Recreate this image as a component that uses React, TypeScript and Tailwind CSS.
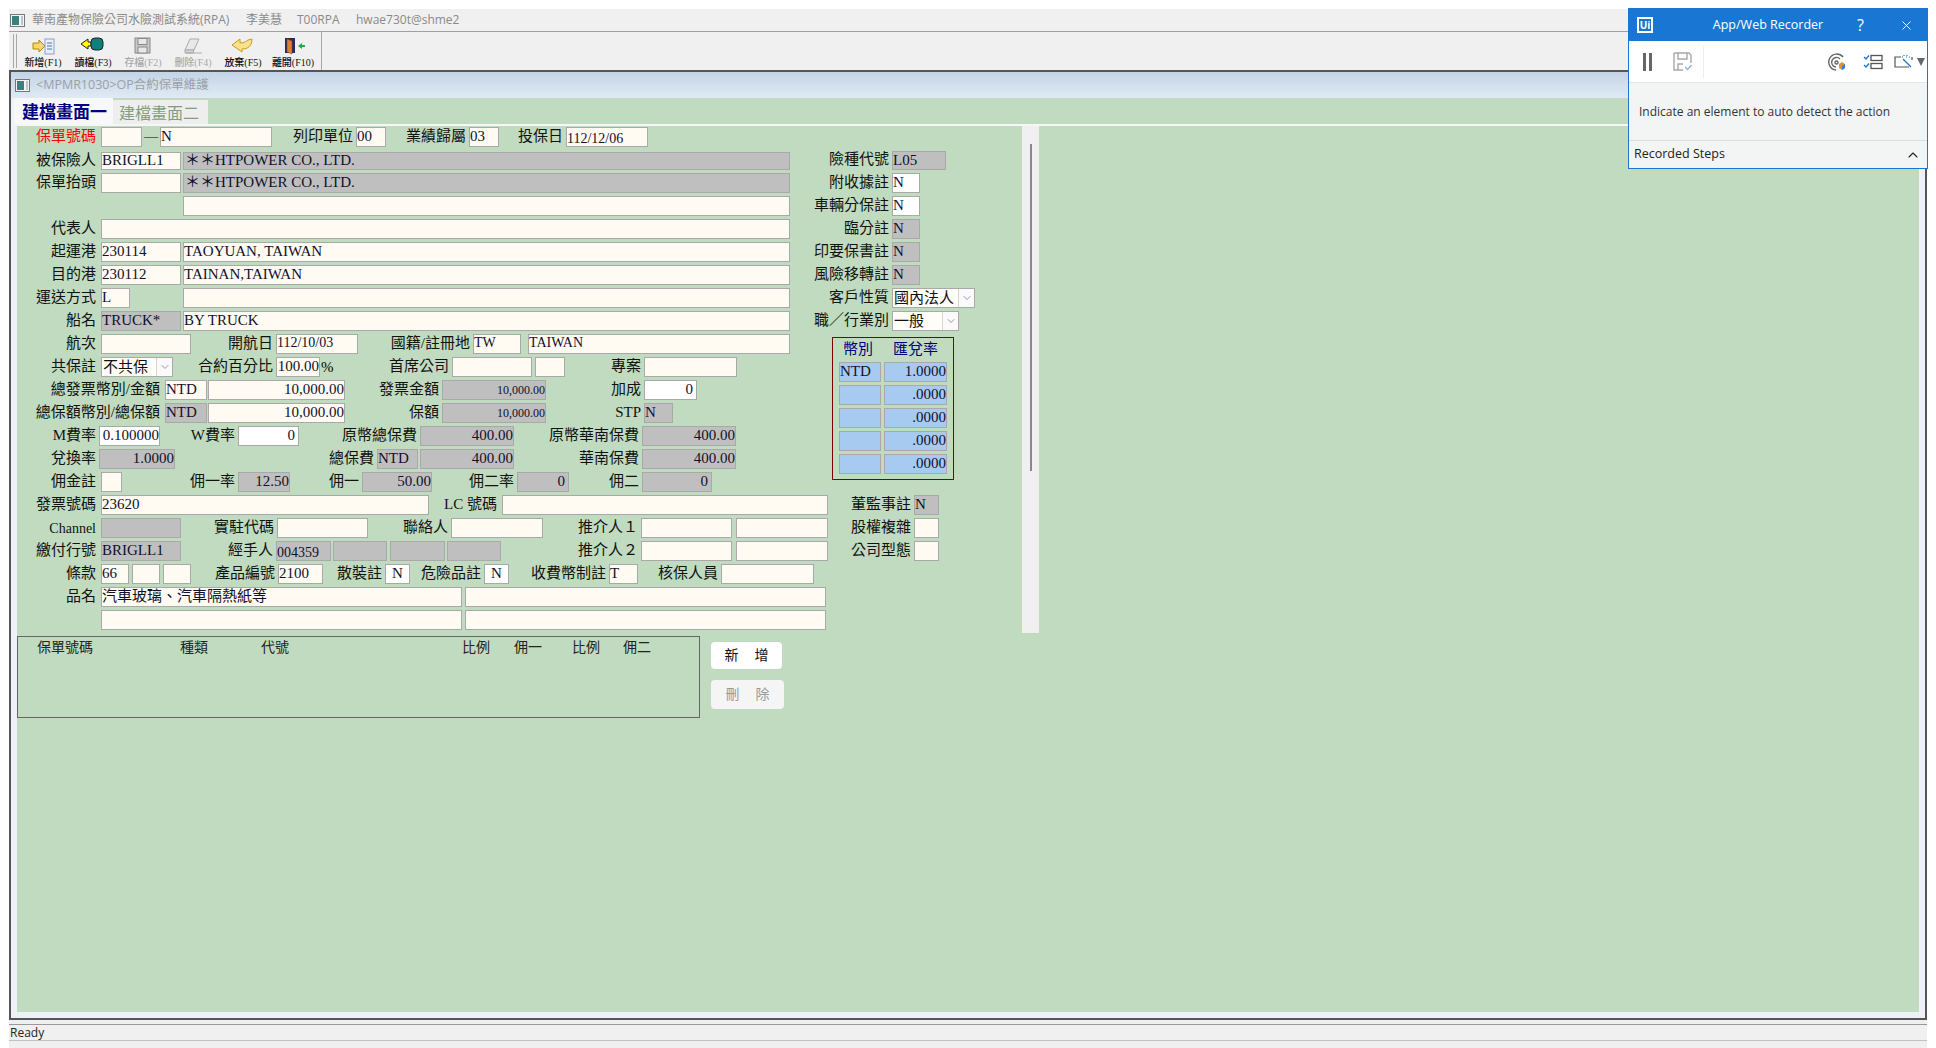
import type { ReactNode } from "react";
import { twMerge } from "tailwind-merge";
import { ChevronDown, ChevronUp, X } from "lucide-react";

interface BoxProps {
  className?: string;
  children?: ReactNode;
}

// 右對齊標籤，寬度從前一欄結束算到下一欄開始
const L = ({ className, children }: BoxProps) => (
  <div
    className={twMerge(
      "shrink-0 h-[20px] pr-[3px] text-right whitespace-nowrap text-[15px] leading-[18px] text-[#111]",
      className
    )}
  >
    {children}
  </div>
);

const F = ({ className, children }: BoxProps) => (
  <div
    className={twMerge(
      "shrink-0 h-[20px] overflow-hidden whitespace-nowrap border border-[#a9a9a9] bg-[#fffbf3] text-[15px] leading-[17px] text-[#10102a]",
      className
    )}
  >
    {children}
  </div>
);

const G = ({ className, children }: BoxProps) => (
  <F className={twMerge("bg-[#bfbfbf]", className)}>{children}</F>
);

const W = ({ className, children }: BoxProps) => (
  <F className={twMerge("bg-white", className)}>{children}</F>
);

const Row = ({ className, children }: BoxProps) => (
  <div className={twMerge("flex items-start h-[23px]", className)}>{children}</div>
);

const Select = ({ className, text }: { className?: string; text: string }) => (
  <div
    className={twMerge(
      "shrink-0 h-[20px] flex items-center justify-between border border-[#a9a9a9] bg-[#fffdf8] text-[15px] leading-[18px] text-[#111] overflow-hidden whitespace-nowrap",
      className
    )}
  >
    <span className="pl-[1px]">{text}</span>
    <span className="shrink-0 w-[16px] h-[18px] flex items-center justify-center bg-[#fafafa] border-l border-[#d4d4d4]">
      <ChevronDown size={12} strokeWidth={1.5} className="text-[#777]" />
    </span>
  </div>
);

const ToolBtn = ({
  label,
  off,
  children,
}: {
  label: string;
  off?: boolean;
  children: ReactNode;
}) => (
  <div className="w-[50px] flex flex-col items-center pt-[5px]">
    <svg width="26" height="18" viewBox="0 0 26 18">
      {children}
    </svg>
    <div
      className={twMerge(
        "mt-px text-[10px] leading-[13px] whitespace-nowrap font-medium",
        off ? "text-[#a8a8a8]" : "text-[#111]"
      )}
    >
      {label}
    </div>
  </div>
);

const Recorder = () => (
  <div className="absolute left-[1628px] top-[8px] w-[300px] h-[161px] flex flex-col border border-[#1976d2] bg-[#f3f5f5] font-['Open_Sans','Noto_Sans_CJK_TC',sans-serif]">
    <div className="h-[32px] flex items-center bg-[#1976d2] text-white">
      <div className="ml-[8px] w-[16px] h-[16px] border-2 border-white flex items-center justify-center text-[10px] leading-none font-bold">
        Ui
      </div>
      <div className="ml-[59px] w-[112px] text-center text-[12.5px] whitespace-nowrap">
        App/Web Recorder
      </div>
      <div className="ml-[33px] text-[16px] leading-none">?</div>
      <X size={15} strokeWidth={1.5} className="ml-[35px]" />
    </div>
    <div className="h-[42px] flex items-center bg-white border-b border-[#e6e6e6]">
      <div className="ml-[14px] flex gap-[3px]">
        <div className="w-[3px] h-[18px] bg-[#666]" />
        <div className="w-[3px] h-[18px] bg-[#666]" />
      </div>
      <svg className="ml-[21px]" width="20" height="20" viewBox="0 0 20 20" fill="none" stroke="#a8a8a8" strokeWidth="1.4">
        <path d="M1 1h15l2 2v8M1 1v17h9" />
        <path d="M5 1v6h9V1M5 18v-6h5" />
        <path d="M12 15l2.5 2.5L18.5 13" stroke="#8ab4e8" />
      </svg>
      <div className="ml-[10px] w-px h-[32px] bg-[#eeeeee]" />
      <svg className="ml-[123px]" width="20" height="20" viewBox="0 0 20 20" fill="none" stroke="#666" strokeWidth="1.4">
        <path d="M16 5A8 8 0 1 0 9 18" />
        <path d="M13 7a4.800 4.800 0 1 0-4 8" />
        <circle cx="9.500" cy="10.500" r="1.500" />
        <path d="M12 12l3-2 3 2v4l-3 2-3-2z" fill="#f28c28" stroke="none" />
        <path d="M15 14l3-2v4l-3 2z" fill="#2f80d8" stroke="none" />
      </svg>
      <svg className="ml-[16px]" width="20" height="16" viewBox="0 0 20 16" fill="none" stroke="#555" strokeWidth="1.3">
        <rect x="8" y="1.500" width="11" height="5" />
        <rect x="8" y="9.500" width="11" height="5" />
        <path d="M1 3l2 2 3-3.500M1 11l2 2 3-3.500" stroke="#1976d2" />
      </svg>
      <svg className="ml-[11px]" width="20" height="16" viewBox="0 0 20 16" fill="none" stroke="#555" strokeWidth="1.2">
        <path d="M7 3H1v10h14M18 3v3" />
        <path d="M9 5l8 8" stroke="#1976d2" />
        <path d="M10 1v1M13 1v1M8 3h1M12 3h1M15 3h1" stroke="#1976d2" strokeDasharray="1 1" />
      </svg>
      <div className="ml-[3px] w-0 h-0 border-x-[4px] border-x-transparent border-t-[8px] border-t-[#666]" />
    </div>
    <div className="flex-1 flex items-center pl-[10px] text-[12px] text-[#333] whitespace-nowrap">
      Indicate an element to auto detect the action
    </div>
    <div className="h-[28px] flex items-center justify-between pl-[5px] pr-[6px] border-t border-[#dddddd] text-[12.5px] text-[#222]">
      Recorded Steps
      <ChevronUp size={16} strokeWidth={1.6} />
    </div>
  </div>
);

const LeftFields = () => (
  <div className="w-[783px] shrink-0">
    <Row>
      <L className="w-[84px] pr-[5px] text-[#ff0000]">保單號碼</L>
      <F className="w-[41px]" />
      <div className="w-[18px] text-center text-[14px] leading-[20px]">—</div>
      <F className="w-[112px]">N</F>
      <L className="w-[84px]">列印單位</L>
      <F className="w-[30px]">00</F>
      <L className="w-[83px]">業績歸屬</L>
      <F className="w-[30px]">03</F>
      <L className="w-[67px]">投保日</L>
      <F className="w-[82px] text-[14px]">112/12/06</F>
    </Row>
    <Row>
      <L className="w-[84px] pr-[5px] pt-px">被保險人</L>
      <F className="w-[80px] h-[18px] mt-[2px] leading-[15px]">BRIGLL1</F>
      <G className="w-[607px] ml-[2px] h-[18px] mt-[2px] leading-[15px] pl-[1px]">＊＊HTPOWER CO., LTD.</G>
    </Row>
    <Row>
      <L className="w-[84px] pr-[5px]">保單抬頭</L>
      <F className="w-[80px]" />
      <G className="w-[607px] ml-[2px] pl-[1px]">＊＊HTPOWER CO., LTD.</G>
    </Row>
    <Row>
      <F className="w-[607px] ml-[166px]" />
    </Row>
    <Row>
      <L className="w-[84px] pr-[5px]">代表人</L>
      <F className="w-[689px]" />
    </Row>
    <Row>
      <L className="w-[84px] pr-[5px]">起運港</L>
      <F className="w-[80px]">230114</F>
      <F className="w-[607px] ml-[2px]">TAOYUAN, TAIWAN</F>
    </Row>
    <Row>
      <L className="w-[84px] pr-[5px]">目的港</L>
      <F className="w-[80px]">230112</F>
      <F className="w-[607px] ml-[2px]">TAINAN,TAIWAN</F>
    </Row>
    <Row>
      <L className="w-[84px] pr-[5px]">運送方式</L>
      <F className="w-[29px]">L</F>
      <F className="w-[607px] ml-[53px]" />
    </Row>
    <Row>
      <L className="w-[84px] pr-[5px]">船名</L>
      <G className="w-[80px]">TRUCK*</G>
      <F className="w-[607px] ml-[2px]">BY TRUCK</F>
    </Row>
    <Row>
      <L className="w-[84px] pr-[5px]">航次</L>
      <F className="w-[90px]" />
      <L className="w-[85px]">開航日</L>
      <F className="w-[82px] text-[14px] leading-[16px]">112/10/03</F>
      <L className="w-[115px]">國籍/註冊地</L>
      <F className="w-[48px] text-[14px] leading-[15px]">TW</F>
      <F className="w-[262px] ml-[7px] text-[14px] leading-[15px]">TAIWAN</F>
    </Row>
    <Row>
      <L className="w-[84px] pr-[5px]">共保註</L>
      <Select className="w-[72px]" text="不共保" />
      <L className="w-[103px]">合約百分比</L>
      <F className="w-[44px] text-right">100.00</F>
      <div className="w-[15px] pl-px text-[15px] leading-[20px]">%</div>
      <L className="w-[117px]">首席公司</L>
      <F className="w-[80px]" />
      <F className="w-[30px] ml-[3px]" />
      <L className="w-[79px]">專案</L>
      <F className="w-[93px]" />
    </Row>
    <Row>
      <L className="w-[148px] pr-[5px]">總發票幣別/金額</L>
      <F className="w-[42px]">NTD</F>
      <F className="w-[137px] ml-px text-right">10,000.00</F>
      <L className="w-[97px]">發票金額</L>
      <G className="w-[104px] text-right text-[12px]">10,000.00</G>
      <L className="w-[98px]">加成</L>
      <W className="w-[53px] text-right pr-[3px]">0</W>
    </Row>
    <Row>
      <L className="w-[148px] pr-[5px]">總保額幣別/總保額</L>
      <G className="w-[42px]">NTD</G>
      <F className="w-[137px] ml-px text-right">10,000.00</F>
      <L className="w-[97px]">保額</L>
      <G className="w-[104px] text-right text-[12px]">10,000.00</G>
      <L className="w-[98px]">STP</L>
      <G className="w-[29px]">N</G>
    </Row>
    <Row>
      <L className="w-[82px]">M費率</L>
      <W className="w-[61px] text-right">0.100000</W>
      <L className="w-[78px]">W費率</L>
      <W className="w-[61px] text-right pr-[3px]">0</W>
      <L className="w-[121px]">原幣總保費</L>
      <G className="w-[94px] text-right">400.00</G>
      <L className="w-[128px]">原幣華南保費</L>
      <G className="w-[94px] text-right">400.00</G>
    </Row>
    <Row>
      <L className="w-[82px]">兌換率</L>
      <G className="w-[76px] text-right">1.0000</G>
      <L className="w-[202px]">總保費</L>
      <G className="w-[41px]">NTD</G>
      <G className="w-[94px] ml-[2px] text-right">400.00</G>
      <L className="w-[128px]">華南保費</L>
      <G className="w-[94px] text-right">400.00</G>
    </Row>
    <Row>
      <L className="w-[84px] pr-[5px]">佣金註</L>
      <F className="w-[21px]" />
      <L className="w-[116px]">佣一率</L>
      <G className="w-[52px] text-right">12.50</G>
      <L className="w-[72px]">佣一</L>
      <G className="w-[70px] text-right">50.00</G>
      <L className="w-[85px]">佣二率</L>
      <G className="w-[52px] text-right pr-[3px]">0</G>
      <L className="w-[73px]">佣二</L>
      <G className="w-[70px] text-right pr-[3px]">0</G>
    </Row>
  </div>
);

const RightFields = () => (
  <div className="w-[222px] shrink-0 pt-[23px]">
    <Row>
      <L className="w-[92px]">險種代號</L>
      <G className="w-[54px] h-[19px] mt-px leading-[16px]">L05</G>
    </Row>
    <Row>
      <L className="w-[92px]">附收據註</L>
      <F className="w-[28px] bg-white">N</F>
    </Row>
    <Row>
      <L className="w-[92px]">車輛分保註</L>
      <F className="w-[28px] bg-white">N</F>
    </Row>
    <Row>
      <L className="w-[92px]">臨分註</L>
      <G className="w-[28px]">N</G>
    </Row>
    <Row>
      <L className="w-[92px]">印要保書註</L>
      <G className="w-[28px]">N</G>
    </Row>
    <Row>
      <L className="w-[92px]">風險移轉註</L>
      <G className="w-[28px]">N</G>
    </Row>
    <Row>
      <L className="w-[92px]">客戶性質</L>
      <Select className="w-[83px]" text="國內法人" />
    </Row>
    <Row>
      <L className="w-[92px]">職／行業別</L>
      <Select className="w-[67px]" text="一般" />
    </Row>
    <div className="ml-[32px] mt-[3px] w-[122px] h-[143px] border border-[#800000]">
      <div className="flex h-[24px] pl-[10px] text-[15px] leading-[22px] text-[#000080]">
        <div className="w-[50px]">幣別</div>
        <div>匯兌率</div>
      </div>
      {["1.0000", ".0000", ".0000", ".0000", ".0000"].map((rate, i) => (
        <div key={i} className="flex h-[23px] pl-[6px] gap-[3px]">
          <F className="w-[42px] bg-[#a6caf0]">{i === 0 ? "NTD" : ""}</F>
          <F className="w-[63px] bg-[#a6caf0] text-right">{rate}</F>
        </div>
      ))}
    </div>
  </div>
);

const BottomFields = () => (
  <div>
    <Row>
      <L className="w-[84px] pr-[5px]">發票號碼</L>
      <F className="w-[328px]">23620</F>
      <L className="w-[73px] pr-[5px]">LC 號碼</L>
      <F className="w-[326px]" />
      <L className="w-[86px]">董監事註</L>
      <G className="w-[25px]">N</G>
    </Row>
    <Row>
      <L className="w-[84px] pr-[5px] text-[14px]">Channel</L>
      <G className="w-[80px]" />
      <L className="w-[96px]">實駐代碼</L>
      <F className="w-[91px]" />
      <L className="w-[83px]">聯絡人</L>
      <F className="w-[92px]" />
      <L className="w-[98px]">推介人１</L>
      <F className="w-[91px]" />
      <F className="w-[92px] ml-[4px]" />
      <L className="w-[86px]">股權複雜</L>
      <F className="w-[25px]" />
    </Row>
    <Row>
      <L className="w-[84px] pr-[5px]">繳付行號</L>
      <G className="w-[80px]">BRIGLL1</G>
      <L className="w-[95px]">經手人</L>
      <G className="w-[55px] text-[14px]">004359</G>
      <G className="w-[54px] ml-[2px]" />
      <G className="w-[55px] ml-[3px]" />
      <G className="w-[54px] ml-[2px]" />
      <L className="w-[140px]">推介人２</L>
      <F className="w-[91px]" />
      <F className="w-[92px] ml-[4px]" />
      <L className="w-[86px]">公司型態</L>
      <F className="w-[25px]" />
    </Row>
    <Row>
      <L className="w-[84px] pr-[5px]">條款</L>
      <F className="w-[28px]">66</F>
      <F className="w-[28px] ml-[3px]" />
      <F className="w-[28px] ml-[3px]" />
      <L className="w-[87px]">產品編號</L>
      <F className="w-[45px]">2100</F>
      <L className="w-[62px]">散裝註</L>
      <W className="w-[25px] text-center">N</W>
      <L className="w-[74px]">危險品註</L>
      <W className="w-[25px] text-center">N</W>
      <L className="w-[100px]">收費幣制註</L>
      <F className="w-[29px]">T</F>
      <L className="w-[83px]">核保人員</L>
      <F className="w-[93px]" />
    </Row>
    <Row>
      <L className="w-[84px] pr-[5px]">品名</L>
      <F className="w-[361px]">汽車玻璃、汽車隔熱紙等</F>
      <F className="w-[361px] ml-[3px]" />
    </Row>
    <Row>
      <F className="w-[361px] ml-[84px]" />
      <F className="w-[361px] ml-[3px]" />
    </Row>
  </div>
);

export default function App() {
  return (
    <div className="relative w-[1936px] h-[1048px] overflow-hidden bg-white pt-[9px] pl-[9px] pr-[9px] flex flex-col font-['Liberation_Serif','Noto_Sans_CJK_TC',serif]">
      {/* 主視窗標題 */}
      <div className="h-[23px] flex items-center bg-[#f0f0f0] border-b border-[#a0a0a0] text-[12px] text-[#8a8a8a] font-['Open_Sans','Noto_Sans_CJK_TC',sans-serif] whitespace-nowrap">
        <svg className="ml-[1px]" width="15" height="13" viewBox="0 0 15 13">
          <rect x="0.500" y="0.500" width="14" height="12" fill="#f4f4f4" stroke="#777" />
          <rect x="2" y="2" width="7" height="9" fill="#3b7f7f" />
          <rect x="11" y="2" width="2" height="9" fill="#b8c4d0" />
        </svg>
        <span className="ml-[7px] w-[214px]">華南產物保險公司水險測試系統(RPA)</span>
        <span className="w-[51px]">李美慧</span>
        <span className="w-[59px]">T00RPA</span>
        <span>hwae730t@shme2</span>
      </div>

      {/* 工具列 */}
      <div className="h-[38px] flex bg-[#f0f0f0]">
        <div className="ml-[4px] mr-[1px] mt-[2px] w-[4px] h-[34px] border-x border-[#a8a8a8]" />
        <ToolBtn label="新增(F1)">
          <path d="M3 6h6V3l6 6-6 6v-3H3z" fill="#f5d76e" stroke="#b8860b" />
          <rect x="15" y="2" width="9" height="15" fill="#e8eefa" stroke="#8aa0c8" />
          <path d="M17 6h5M17 9h5M17 12h5" stroke="#5577aa" />
        </ToolBtn>
        <ToolBtn label="讀檔(F3)">
          <path d="M11 9H8v3L1 7l7-5v3h3z" fill="#ffff00" stroke="#222" />
          <rect x="11" y="1" width="12" height="12" rx="4" fill="#0f7f7f" stroke="#222" />
        </ToolBtn>
        <ToolBtn label="存檔(F2)" off>
          <rect x="5" y="1" width="15" height="15" fill="#c8c8c8" stroke="#888" />
          <rect x="8" y="1.500" width="9" height="6" fill="#e8e8e8" stroke="#888" />
          <rect x="8" y="10" width="9" height="6" fill="#e8e8e8" stroke="#888" />
        </ToolBtn>
        <ToolBtn label="刪除(F4)" off>
          <path d="M10 2h9l-5 11H5z" fill="#e8e8e8" stroke="#aaa" />
          <path d="M5 13h9l-1 3H5zM6 16h16" fill="#d4d4d4" stroke="#aaa" />
        </ToolBtn>
        <ToolBtn label="放棄(F5)">
          <path d="M2 8l8-6v4c3 0 6-1 8-3l4-1c0 7-4 10-10 10v3z" fill="#fbe28a" stroke="#c89a20" />
        </ToolBtn>
        <ToolBtn label="離開(F10)">
          <rect x="5" y="1" width="10" height="15" fill="#2a2a60" />
          <path d="M7 2l5 2v13l-5-2z" fill="#d9822b" stroke="#7a4410" strokeWidth="0.500" />
          <path d="M22 6v2h3v2h-3v2l-4-3z" fill="#22aa44" />
        </ToolBtn>
        <div className="ml-[3px] w-px bg-[#a8a8a8]" />
      </div>

      {/* 子視窗 */}
      <div className="h-[950px] border-2 border-[#555] flex flex-col bg-[#eef1f7]">
        <div className="h-[26px] flex items-center bg-gradient-to-b from-[#c4d4e6] to-[#e0eaf4] text-[12.5px] text-[#9aa0a6] font-['Open_Sans','Noto_Sans_CJK_TC',sans-serif] whitespace-nowrap">
          <svg className="ml-[4px]" width="15" height="13" viewBox="0 0 15 13">
            <rect x="0.500" y="0.500" width="14" height="12" fill="#f4f4f4" stroke="#777" />
            <rect x="2" y="2" width="7" height="9" fill="#3b7f7f" />
            <rect x="11" y="2" width="2" height="9" fill="#b8c4d0" />
          </svg>
          <span className="ml-[6px]">&lt;MPMR1030&gt;OP合約保單維護</span>
        </div>
        <div className="flex-1 mx-[6px] mb-[6px] flex flex-col bg-[#c0dbbf]">
          {/* 頁籤 */}
          <div className="h-[28px] flex items-end border-b-2 border-[#f4f7f4] pb-0">
            <div className="-ml-[3px] w-[99px] h-[26px] bg-[#f8f8f8] pl-[8px] text-[17px] leading-[25px] font-bold text-[#000080] font-['Noto_Sans_CJK_TC',sans-serif] whitespace-nowrap">
              建檔畫面一
            </div>
            <div className="w-[95px] h-[24px] bg-[#eeeeee] pl-[6px] text-[16px] leading-[24px] text-[#7f9f7f] font-['Noto_Sans_CJK_TC',sans-serif] whitespace-nowrap">
              建檔畫面二
            </div>
          </div>

          <div className="flex h-[507px]">
            <div className="w-[1005px] shrink-0 pt-px">
              <div className="flex">
                <LeftFields />
                <RightFields />
              </div>
              <BottomFields />
            </div>
            <div className="w-[17px] shrink-0 bg-[#f0f0f0] pt-[18px] pl-[8px]">
              <div className="w-[2px] h-[327px] bg-[#888]" />
            </div>
          </div>

          {/* 明細 */}
          <div className="flex items-start mt-[3px]">
            <div className="w-[683px] h-[82px] border border-[#666] flex pl-[19px] text-[14px] leading-[18px] text-[#222] font-['Noto_Sans_CJK_TC',sans-serif] whitespace-nowrap">
              <div className="w-[143px]">保單號碼</div>
              <div className="w-[81px]">種類</div>
              <div className="w-[201px]">代號</div>
              <div className="w-[52px]">比例</div>
              <div className="w-[58px]">佣一</div>
              <div className="w-[51px]">比例</div>
              <div>佣二</div>
            </div>
            <div className="ml-[11px] mt-[6px]">
              <div className="w-[71px] h-[27px] flex items-center justify-center gap-[16px] rounded-sm bg-white text-[14px] text-[#111]">
                <span>新</span>
                <span>增</span>
              </div>
              <div className="mt-[11px] w-[73px] h-[29px] flex items-center justify-center gap-[16px] rounded-sm bg-[#f5f5f5] text-[14px] text-[#999]">
                <span>刪</span>
                <span>除</span>
              </div>
            </div>
          </div>
        </div>
      </div>

      {/* 狀態列 */}
      <div className="mt-[4px] h-[16px] flex items-center bg-[#f0f0f0] border-t border-[#999] pl-px text-[12px] text-[#222] font-['Open_Sans',sans-serif]">
        Ready
      </div>
      <div className="flex-1 bg-[#f0f0f0] border-t border-[#c0c0c0]" />
      <div className="absolute left-[9px] right-[9px] top-[1020px] h-[4px] bg-[#f0f0f0]" />

      <Recorder />
    </div>
  );
}
